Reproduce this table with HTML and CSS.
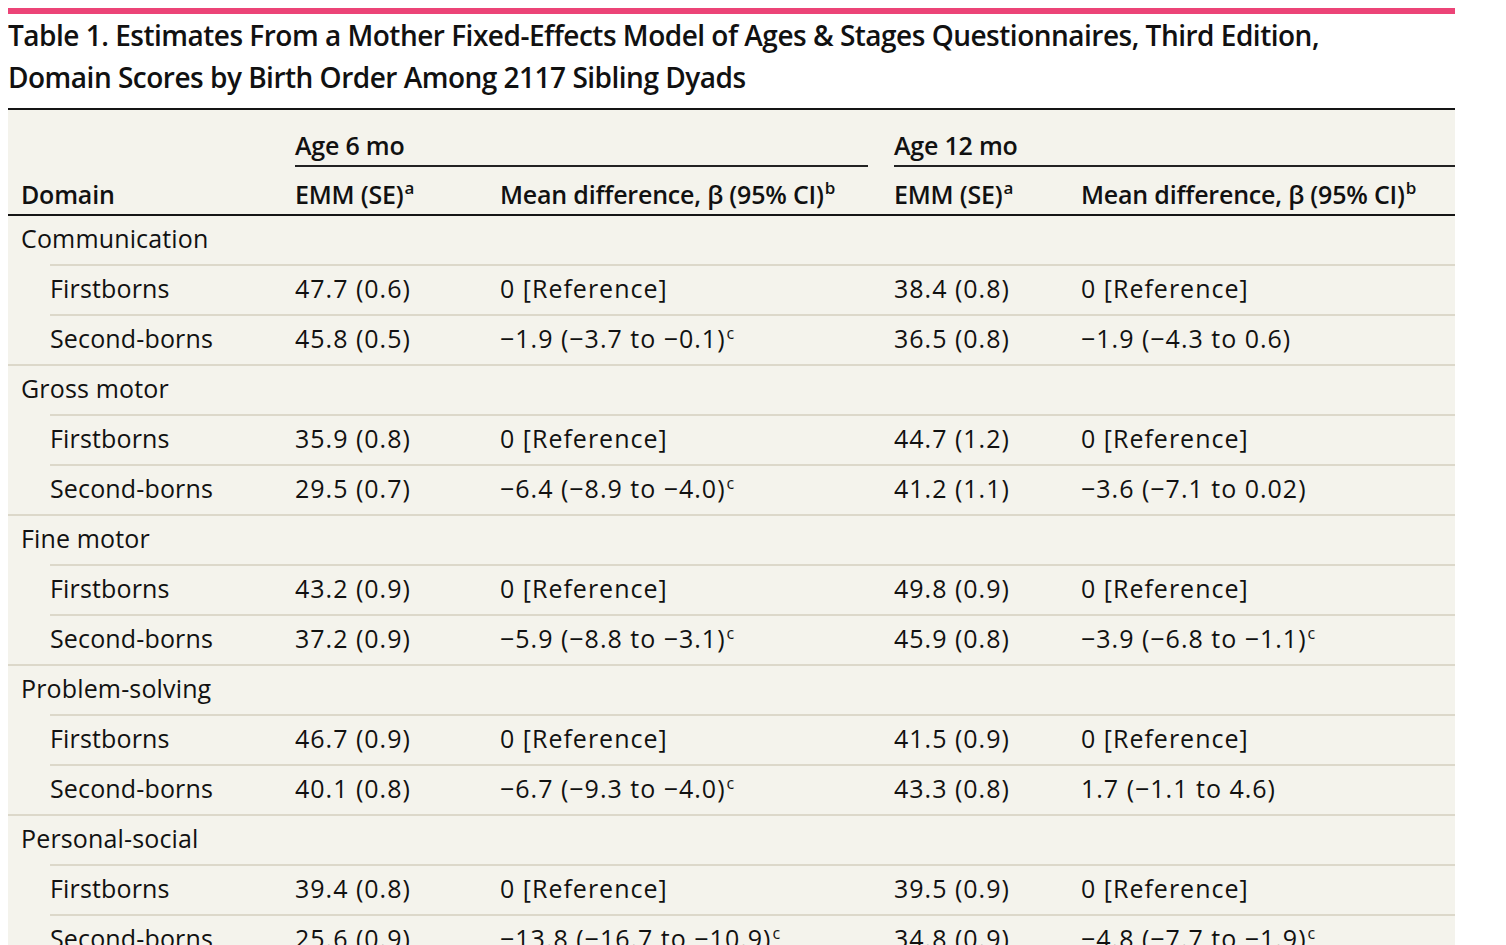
FILE: index.html
```html
<!DOCTYPE html>
<html lang="en">
<head>
<meta charset="utf-8">
<title>Table 1</title>
<link rel="stylesheet" href="styles.css">
</head>
<body>
<div class="page">
  <div class="accent"></div>
  <h1 class="title">Table 1. Estimates From a Mother Fixed-Effects Model of Ages &amp; Stages Questionnaires, Third Edition,<br>Domain Scores by Birth Order Among 2117 Sibling Dyads</h1>
  <table class="data">
    <colgroup>
      <col class="c1"><col class="c2"><col class="c3"><col class="c4"><col class="c5">
    </colgroup>
    <thead>
      <tr class="group">
        <th></th>
        <th colspan="2" class="g6"><div class="gl">Age 6 mo</div></th>
        <th colspan="2" class="g12"><div class="gl">Age 12 mo</div></th>
      </tr>
      <tr class="cols">
        <th class="label">Domain</th>
        <th>EMM (SE)<sup>a</sup></th>
        <th>Mean difference, β (95% CI)<sup>b</sup></th>
        <th>EMM (SE)<sup>a</sup></th>
        <th>Mean difference, β (95% CI)<sup>b</sup></th>
      </tr>
    </thead>
    <tbody>
      <tr class="head"><td class="label">Communication</td><td></td><td></td><td></td><td></td></tr>
      <tr class="sub"><td class="label">Firstborns</td><td>47.7 (0.6)</td><td>0 [Reference]</td><td>38.4 (0.8)</td><td>0 [Reference]</td></tr>
      <tr class="sub"><td class="label">Second-borns</td><td>45.8 (0.5)</td><td>−1.9 (−3.7 to −0.1)<sup>c</sup></td><td>36.5 (0.8)</td><td>−1.9 (−4.3 to 0.6)</td></tr>
      <tr class="head"><td class="label">Gross motor</td><td></td><td></td><td></td><td></td></tr>
      <tr class="sub"><td class="label">Firstborns</td><td>35.9 (0.8)</td><td>0 [Reference]</td><td>44.7 (1.2)</td><td>0 [Reference]</td></tr>
      <tr class="sub"><td class="label">Second-borns</td><td>29.5 (0.7)</td><td>−6.4 (−8.9 to −4.0)<sup>c</sup></td><td>41.2 (1.1)</td><td>−3.6 (−7.1 to 0.02)</td></tr>
      <tr class="head"><td class="label">Fine motor</td><td></td><td></td><td></td><td></td></tr>
      <tr class="sub"><td class="label">Firstborns</td><td>43.2 (0.9)</td><td>0 [Reference]</td><td>49.8 (0.9)</td><td>0 [Reference]</td></tr>
      <tr class="sub"><td class="label">Second-borns</td><td>37.2 (0.9)</td><td>−5.9 (−8.8 to −3.1)<sup>c</sup></td><td>45.9 (0.8)</td><td>−3.9 (−6.8 to −1.1)<sup>c</sup></td></tr>
      <tr class="head"><td class="label">Problem-solving</td><td></td><td></td><td></td><td></td></tr>
      <tr class="sub"><td class="label">Firstborns</td><td>46.7 (0.9)</td><td>0 [Reference]</td><td>41.5 (0.9)</td><td>0 [Reference]</td></tr>
      <tr class="sub"><td class="label">Second-borns</td><td>40.1 (0.8)</td><td>−6.7 (−9.3 to −4.0)<sup>c</sup></td><td>43.3 (0.8)</td><td>1.7 (−1.1 to 4.6)</td></tr>
      <tr class="head"><td class="label">Personal-social</td><td></td><td></td><td></td><td></td></tr>
      <tr class="sub"><td class="label">Firstborns</td><td>39.4 (0.8)</td><td>0 [Reference]</td><td>39.5 (0.9)</td><td>0 [Reference]</td></tr>
      <tr class="sub"><td class="label">Second-borns</td><td>25.6 (0.9)</td><td>−13.8 (−16.7 to −10.9)<sup>c</sup></td><td>34.8 (0.9)</td><td>−4.8 (−7.7 to −1.9)<sup>c</sup></td></tr>
    </tbody>
  </table>
</div>
</body>
</html>
```
FILE: styles.css
```css
html, body {
  background: #ffffff;
}
body {
  margin: 8px;
  color: #111111;
  font-family: "Open Sans", "Liberation Sans", sans-serif;
}
.page {
  width: 1447px;
}
.accent {
  height: 6px;
  background: #ec4477;
}
.title {
  margin: 0 0 10px 0;
  font-size: 28px;
  line-height: 42px;
  font-weight: 600;
  letter-spacing: -0.5px;
  color: #111111;
}
.data {
  width: 1447px;
  table-layout: fixed;
  border-collapse: separate;
  border-spacing: 0;
  background: #f4f3ec;
  border-top: 2px solid #151515;
  font-size: 25px;
}
.c1 { width: 275px; }
.c2 { width: 205px; }
.c3 { width: 394px; }
.c4 { width: 187px; }
.c5 { width: 386px; }
.data th {
  font-weight: 600;
  text-align: left;
  line-height: 30px;
  white-space: nowrap;
  letter-spacing: -0.2px;
}
.group th {
  padding: 20px 0 0 12px;
  vertical-align: bottom;
}
.group th.g6 {
  padding-right: 14px;
}
.gl {
  padding-bottom: 5px;
  border-bottom: 2px solid #222222;
}
.cols th {
  padding: 12px 12px 5px 12px;
  border-bottom: 2px solid #151515;
}
.cols th.label {
  padding-left: 13px;
}
.cols th sup {
  font-size: 17px;
  top: -10px;
}
.data td {
  padding: 7px 12px 11px 12px;
  line-height: 30px;
  white-space: nowrap;
  border-top: 2px solid #dcd8ca;
  letter-spacing: 1px;
}
.data tbody tr:first-child td {
  border-top: 0;
}
.data td.label {
  padding-left: 13px;
  letter-spacing: 0.15px;
}
.sub td.label {
  padding-left: 42px;
  border-top-color: transparent;
  background: linear-gradient(#dcd8ca, #dcd8ca) 42px 0 / 100% 2px no-repeat border-box;
}
sup {
  font-size: 16px;
  line-height: 0;
  vertical-align: 0;
  position: relative;
  top: -9px;
  margin-left: 1px;
  letter-spacing: 0;
}
```
